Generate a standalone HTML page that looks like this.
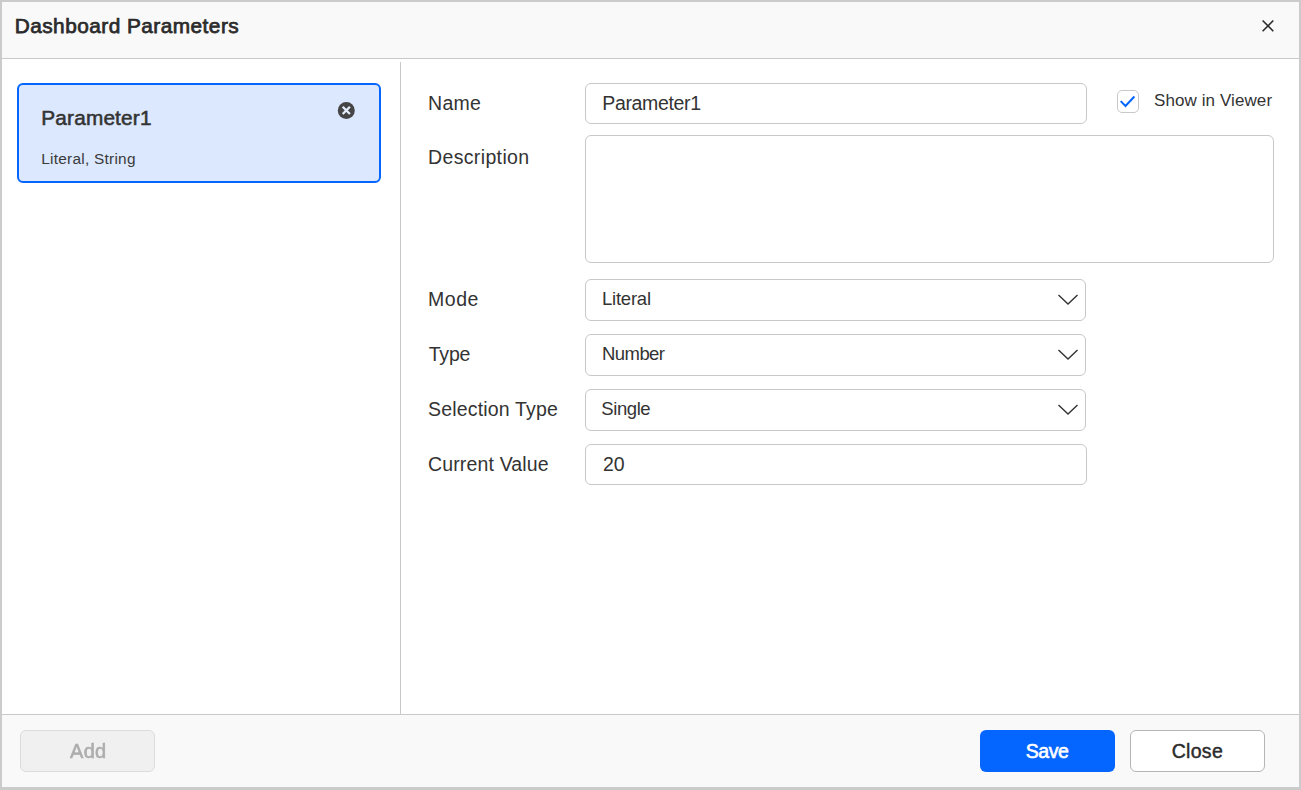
<!DOCTYPE html>
<html>
<head>
<meta charset="utf-8">
<style>
*{box-sizing:border-box;margin:0;padding:0}
html,body{width:1301px;height:790px;overflow:hidden;background:#fff}
body{font-family:"Liberation Sans",sans-serif;color:#333;position:relative}
.abs{position:absolute}
.frame{left:0;top:0;width:1301px;height:790px;border-style:solid;border-color:#cbcbcb;border-width:2px 2px 3px 2px;background:#fff}
.header{left:2px;top:2px;width:1297px;height:57px;background:#f9f9f9;border-bottom:1px solid #c9c9c9}
.footer{left:2px;top:714px;width:1297px;height:73px;background:#f9f9f9;border-top:1px solid #c9c9c9}
.divider{left:400px;top:62px;width:1px;height:652px;background:#c9c9c9}
.card{left:17px;top:83px;width:364px;height:100px;border:2px solid #0565ff;border-radius:6px;background:#dbe8fd}
.t{white-space:nowrap;line-height:1}
.inp{border:1px solid #c8c8c8;border-radius:6px;background:#fff}
.btn{top:730px;width:135px;height:42px;border-radius:6px}
</style>
</head>
<body>
<div class="abs frame"></div>
<div class="abs header"></div>
<div class="abs t" id="title" style="left:14.70px;top:15.80px;font-size:20.80px;letter-spacing:0.474px;color:#2b2b2b;-webkit-text-stroke:0.75px #2b2b2b">Dashboard Parameters</div>
<svg class="abs" style="left:1260px;top:18px" width="16" height="16" viewBox="0 0 16 16"><path d="M2.6 2.5 L13.3 13.2 M13.3 2.5 L2.6 13.2" stroke="#2b2b2b" stroke-width="1.6" fill="none"/></svg>

<div class="abs divider"></div>
<div class="abs card"></div>
<div class="abs t" id="ctitle" style="left:41.30px;top:107.70px;font-size:20.80px;letter-spacing:0.167px;color:#333;-webkit-text-stroke:0.55px #333">Parameter1</div>
<div class="abs t" id="csub" style="left:41.30px;top:151.00px;font-size:15.40px;letter-spacing:0.250px;color:#3a3a3a">Literal, String</div>
<svg class="abs" style="left:337px;top:101px" width="20" height="20" viewBox="0 0 20 20"><circle cx="9.3" cy="9.4" r="8.5" fill="#454545"/><path d="M5.7 5.8 L12.9 13 M12.9 5.8 L5.7 13" stroke="#e6effe" stroke-width="2.3" fill="none"/></svg>

<div class="abs t" id="lname" style="left:428.00px;top:94.00px;font-size:19.50px;letter-spacing:0.300px;color:#333">Name</div>
<div class="abs t" id="ldesc" style="left:428.00px;top:148.00px;font-size:19.50px;letter-spacing:0.360px;color:#333">Description</div>
<div class="abs t" id="lmode" style="left:428.00px;top:290.00px;font-size:19.50px;letter-spacing:0.533px;color:#333">Mode</div>
<div class="abs t" id="ltype" style="left:428.70px;top:345.00px;font-size:19.50px;letter-spacing:-0.167px;color:#333">Type</div>
<div class="abs t" id="lsel" style="left:428.00px;top:400.00px;font-size:19.50px;letter-spacing:0.177px;color:#333">Selection Type</div>
<div class="abs t" id="lcur" style="left:428.00px;top:455.00px;font-size:19.50px;letter-spacing:0.150px;color:#333">Current Value</div>

<div class="abs inp" style="left:585px;top:83px;width:502px;height:41px"></div>
<div class="abs t" id="iname" style="left:602.30px;top:94.00px;font-size:19.50px;letter-spacing:-0.344px;color:#333">Parameter1</div>
<div class="abs inp" style="left:585px;top:135px;width:689px;height:128px"></div>
<div class="abs inp" style="left:585px;top:279px;width:501px;height:42px"></div>
<div class="abs t" id="dlit" style="left:602.00px;top:290.30px;font-size:18.50px;letter-spacing:-0.233px;color:#333">Literal</div>
<div class="abs inp" style="left:585px;top:334px;width:501px;height:42px"></div>
<div class="abs t" id="dnum" style="left:602.00px;top:345.30px;font-size:18.50px;letter-spacing:-0.560px;color:#333">Number</div>
<div class="abs inp" style="left:585px;top:389px;width:501px;height:42px"></div>
<div class="abs t" id="dsin" style="left:601.30px;top:400.30px;font-size:18.50px;letter-spacing:-0.420px;color:#333">Single</div>
<div class="abs inp" style="left:585px;top:444px;width:502px;height:41px"></div>
<div class="abs t" id="icur" style="left:603.00px;top:455.00px;font-size:19.50px;letter-spacing:0.000px;color:#333">20</div>

<svg class="abs" style="left:1056px;top:292px" width="24" height="16" viewBox="0 0 24 16"><path d="M2.5 3 L12 12 L21.5 3" stroke="#333" stroke-width="1.4" fill="none"/></svg>
<svg class="abs" style="left:1056px;top:347px" width="24" height="16" viewBox="0 0 24 16"><path d="M2.5 3 L12 12 L21.5 3" stroke="#333" stroke-width="1.4" fill="none"/></svg>
<svg class="abs" style="left:1056px;top:402px" width="24" height="16" viewBox="0 0 24 16"><path d="M2.5 3 L12 12 L21.5 3" stroke="#333" stroke-width="1.4" fill="none"/></svg>

<div class="abs" style="left:1117px;top:90px;width:22px;height:23px;border:1px solid #c8c8c8;border-radius:5px;background:#fff"></div>
<svg class="abs" style="left:1117px;top:90px" width="22" height="23" viewBox="0 0 22 23"><path d="M3.7 11.1 L8.5 16 L17.4 6.5" stroke="#0565ff" stroke-width="2" fill="none"/></svg>
<div class="abs t" id="show" style="left:1154.00px;top:92.30px;font-size:17.00px;letter-spacing:0.092px;color:#333">Show in Viewer</div>

<div class="abs footer"></div>
<div class="abs btn" style="left:20px;background:#f0f0f0;border:1px solid #dcdcdc"></div>
<div class="abs btn" style="left:980px;background:#0565ff"></div>
<div class="abs btn" style="left:1130px;background:#fff;border:1px solid #b5b5b5"></div>
<div class="abs t" id="badd" style="left:69.70px;top:741.30px;font-size:20.00px;letter-spacing:0.300px;color:#adadad;-webkit-text-stroke:0.6px #adadad;will-change:transform">Add</div>
<div class="abs t" id="bsave" style="left:1025.70px;top:742.00px;font-size:19.50px;letter-spacing:-0.400px;color:#fff;-webkit-text-stroke:0.6px #fff">Save</div>
<div class="abs t" id="bclose" style="left:1171.70px;top:742.00px;font-size:19.50px;letter-spacing:0.300px;color:#2b2b2b;-webkit-text-stroke:0.45px #2b2b2b">Close</div>
</body>
</html>
